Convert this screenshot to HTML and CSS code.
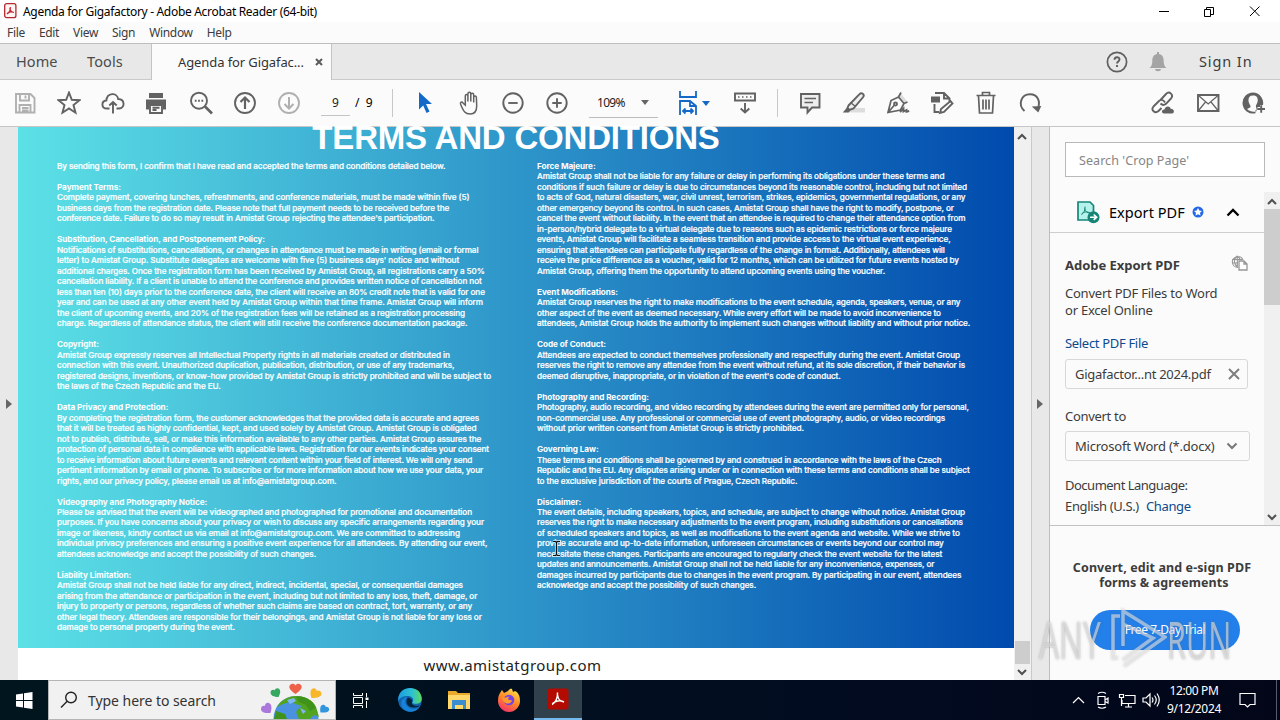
FILE: index.html
```html
<!DOCTYPE html>
<html lang="en">
<head>
<meta charset="utf-8">
<title>Agenda for Gigafactory - Adobe Acrobat Reader (64-bit)</title>
<link rel="stylesheet" href="styles.css">
</head>
<body>
<div class="screen">
<header class="titlebar">
  <svg class="appicon" width="13" height="16" viewBox="0 0 13 16"><rect x=".7" y=".7" width="11.2" height="14" rx="2" fill="#fff5f4" stroke="#b3282d" stroke-width="1.3"/><path d="M3 11c2-1 3.500-4 3.300-7M5.800 5c.4 2.500 2 4.200 4.200 4.500M3 10.800c1-1.600 4-2.400 7-1.500" fill="none" stroke="#c4262e" stroke-width="1.200"/></svg>
  <span class="title">Agenda for Gigafactory - Adobe Acrobat Reader (64-bit)</span>
  <svg class="winbtns" width="104" height="16" viewBox="0 0 104 16" fill="none" stroke="#000" stroke-width="1"><path d="M2 8.500h10M47.500 6.500h6v7h-6zM49.500 6V4.500h7v7H54M93 3.500l9.500 9.500M102.500 3.500L93 13"/></svg>
</header>
<nav class="menubar"><span>File</span><span>Edit</span><span>View</span><span>Sign</span><span>Window</span><span>Help</span></nav>
<div class="tabs">
  <span class="home">Home</span><span class="tools">Tools</span>
  <div class="tab"><span>Agenda for Gigafac...</span><svg width="8" height="8" viewBox="0 0 8 8"><path d="M1 1l6 6M7 1L1 7" stroke="#5b5b5b" stroke-width="2"/></svg></div>
  <div class="account">
    <svg width="22" height="22" viewBox="0 0 22 22" fill="none" stroke="#5f5f5f" stroke-width="1.700"><circle cx="11" cy="11" r="9.600"/><path d="M8.500 8.700c0-3.300 5-3.300 5-.2 0 1.900-2.500 2-2.500 4M11 14v2" stroke-width="1.900"/></svg>
    <svg class="bell" width="20" height="22" viewBox="0 0 20 22" fill="#a4a4a4"><path d="M9 1h2v2c4 .8 4.700 4 4.700 7 0 3.500.8 5.500 2.800 7h-17c2-1.500 2.800-3.500 2.800-7 0-3 .7-6.200 4.700-7zM7 18h6c0 3-6 3-6 0z"/></svg>
    <span>Sign In</span>
  </div>
</div>
<div class="toolbar">
  <div class="tool"><svg viewBox="0 0 24 24" class="dim"><path d="M3 3h14.500l4 4v14.500H3zM7 3v6.500h9V3M6.500 21.500V14h11v7.500M12.500 4.500v3M9 17h6.500M9 19.500h6.500"/></svg></div>
  <div class="tool"><svg viewBox="0 0 24 24"><path d="M12 1.500l2.800 7.300 7.700.4-6 4.900 2 7.600-6.500-4.300-6.500 4.300 2-7.600-6-4.900 7.700-.4z"/></svg></div>
  <div class="tool"><svg viewBox="0 0 24 24"><path d="M8.500 17.500H6c-6 0-6-7.500-.6-8C6 1.500 16 1 17.200 8c7 .3 7 9 .8 9.500h-2.500M12 22.500V11M8.300 14.500L12 11l3.700 3.500"/></svg></div>
  <div class="tool print"><svg viewBox="0 0 24 24"><path class="solid" d="M5 2h14v5H5zM2 8.500h20v10h-3V14H5v4.500H2z"/><path d="M6 14h12v8H6zM8.500 16.800h7M8.500 19h4"/></svg></div>
  <div class="tool"><svg viewBox="0 0 24 24"><circle cx="10" cy="9.700" r="8"/><path d="M16 15.500l7 7" stroke-width="2.700"/><path d="M5.800 9.700h1.800M9.100 9.700h1.800M12.400 9.700h1.800" stroke-width="2"/></svg></div>
  <div class="tool"><svg viewBox="0 0 24 24"><circle cx="12" cy="12" r="10"/><path d="M12 18V6.500M7.500 11L12 6.500l4.500 4.500" stroke-width="2.200"/></svg></div>
  <div class="tool"><svg viewBox="0 0 24 24" class="dim"><circle cx="12" cy="12" r="10"/><path d="M12 6v11.500M7.500 13l4.500 4.500 4.500-4.500" stroke-width="2"/></svg></div>
  <div class="pager"><span class="page">9</span><span class="total">/&nbsp; 9</span></div>
  <div class="tool first"><svg viewBox="0 0 24 24"><path fill="#1468c8" stroke="none" d="M6 1l13 12h-6l3.500 7.500-3 1.500-3.300-7.500L6 18.500z"/></svg></div>
  <div class="tool"><svg viewBox="0 0 24 24"><path stroke-width="1.500" d="M7.800 14V5c0-2 2.600-2 2.600 0v5.500V3c0-2.300 2.900-2.300 2.900 0v7.500V4c0-2.300 2.900-2.300 2.900 0v7.500V6.500c0-2 2.700-2 2.700 0l.3 8.500c0 5-2 8-6.500 8-5 0-6.500-2.200-9.500-9.500-1-2.400 1.200-3.300 2.500-1.300z" transform="translate(.5 0)"/></svg></div>
  <div class="tool"><svg viewBox="0 0 24 24"><circle cx="12" cy="12" r="9.700"/><path d="M7.300 12h9.400"/></svg></div>
  <div class="tool"><svg viewBox="0 0 24 24"><circle cx="12" cy="12" r="9.700"/><path d="M7.300 12h9.400M12 7.300v9.400"/></svg></div>
  <div class="zoombox"><span>109%</span><i class="caret"></i></div>
  <div class="fit"><svg viewBox="0 0 24 26" width="24" height="26" fill="none" stroke="#1468c8" stroke-width="1.800"><path d="M4 1v6h16V1M4 25V11h10l6 5v9M14 11v5h6M7 21h10M9.500 18.500L7 21l2.500 2.500M14.500 18.500L17 21l-2.500 2.500"/></svg><i class="caret blue"></i></div>
  <div class="tool"><svg viewBox="0 0 24 24"><path d="M2 2.500h20v7H2z"/><path d="M5 6h1.500M9 6h1.500M13 6h1.500M17 6h1.500" stroke-width="1.500"/><path d="M12 12v9.500M7.700 17.500L12 21.500l4.300-4"/></svg></div>
  <div class="tool comment"><svg viewBox="0 0 24 24"><path d="M3 3h18.500v13.500H14L9.500 21.500v-5H3z" fill="#eee"/><path d="M6.500 7.500h11.500M6.500 11.500h8.500" stroke-width="1.500"/></svg></div>
  <div class="tool"><svg viewBox="0 0 24 24"><path d="M9 17h14v4.500H3z" fill="#ddd" stroke="none"/><path d="M6.500 14.500L17.500 3.200c2-2.200 5.500.2 3.700 2.800L11.500 17.500 7.500 19l-2-2z" fill="#eee"/><path d="M8.500 11.500l5 4" stroke-width="1.500"/><path class="solid" d="M5 16.500l3.500 3-2 2H.8z"/></svg></div>
  <div class="tool"><svg viewBox="0 0 24 24"><path d="M12.500 6L15 2.500l6.500 8.500L18 12.500z" fill="#ddd" stroke="none"/><path d="M2 21.500L5 9.500 12.500 6l5.500 6.500-3.500 6.500zM12.500 6L15 1.500M18 12.500l3.500-1.500M2.500 21l6-7" stroke-width="1.700"/><circle cx="9.500" cy="13" r="1.500"/><path d="M14 21l3.500-3.500v3l3-1.500v1.800l2.700-.8"/></svg></div>
  <div class="tool"><svg viewBox="0 0 24 24"><path d="M5 2h9l5.500 5.500v3M14 2v5.500h5.500M4.500 13v8H9M10 22l1-4 9.500-8 2 2.500-8.500 8.500z"/><path class="solid" d="M1 5.500h9v6H1z"/></svg></div>
  <div class="tool"><svg viewBox="0 0 24 24"><path d="M2.500 4.500h19M8.500 4V1.500h7V4M4.500 5l1 17h13l1-17M9 8.500v10M12 8.500v10M15 8.500v10" stroke-width="1.700"/></svg></div>
  <div class="tool"><svg viewBox="0 0 24 24"><path d="M6.500 20C-.5 14 3 3.200 12 3.200c8 0 10.500 7.500 8 14"/><path class="solid" d="M13.800 15.500l9.500-.5-3 6.500z"/></svg></div>
  <div class="share">
  <div class="tool"><svg viewBox="0 0 24 24"><path d="M9.500 9l5.500-6c3.500-3.500 8 1 5 4.500l-5 5.300c-2 1.700-4 1.200-5.500-.3M14 11.500c-2-3.500-4.500-3-6-1.500L2.500 15.500c-3 3.500 1.500 7.500 5 4.500l3-3"/><path class="solid" d="M13 22.500c-3-.3-2.500-4.300.5-4 .8-4 5.500-4 6.200-.8 4 0 4 4.500 1.300 4.800z"/></svg></div>
  <div class="tool"><svg viewBox="0 0 24 24"><path d="M2 4h20.500v16H2z"/><path d="M2.500 4.500L12.200 13l9.800-8.500M2.500 19.500l7-8.500M22 19.500l-7-8.500" stroke-width="1.200"/></svg></div>
  <div class="tool"><svg viewBox="0 0 24 24"><path class="solid" fill-rule="evenodd" d="M12 1.500a10.500 10.500 0 1 0 2.500 20.700V19h2v-3H19v-2h3A10.500 10.500 0 0 0 12 1.500zM12 4.500c4 0 5 2.500 4.700 5.500-.2 2-1.200 3-1.700 4.500-.3 1 0 2 .5 3v2.800c-3 1.200-7 .2-9.500-2.300 1.500-1 3-1 3.500-2 .5-1.200-1.700-3-2-6C7.200 7 8.500 4.500 12 4.500z"/><path d="M16.500 18h7.500M20.200 14.200v7.600"/></svg></div>
  </div>
</div>
<main class="work">
  <div class="gutter"><i class="expand"></i></div>
  <section class="document">
    <div class="page-art">
      <h1>TERMS AND CONDITIONS</h1>
      <div class="columns">
<div class="col">By sending this form, I confirm that I have read and accepted the terms and conditions detailed below.

<b>Payment Terms:</b>
Complete payment, covering lunches, refreshments, and conference materials, must be made within five (5)
business days from the registration date. Please note that full payment needs to be received before the
conference date. Failure to do so may result in Amistat Group rejecting the attendee's participation.

<b>Substitution, Cancellation, and Postponement Policy:</b>
Notifications of substitutions, cancellations, or changes in attendance must be made in writing (email or formal
letter) to Amistat Group. Substitute delegates are welcome with five (5) business days' notice and without
additional charges. Once the registration form has been received by Amistat Group, all registrations carry a 50%
cancellation liability. If a client is unable to attend the conference and provides written notice of cancellation not
less than ten (10) days prior to the conference date, the client will receive an 80% credit note that is valid for one
year and can be used at any other event held by Amistat Group within that time frame. Amistat Group will inform
the client of upcoming events, and 20% of the registration fees will be retained as a registration processing
charge. Regardless of attendance status, the client will still receive the conference documentation package.

<b>Copyright:</b>
Amistat Group expressly reserves all Intellectual Property rights in all materials created or distributed in
connection with this event. Unauthorized duplication, publication, distribution, or use of any trademarks,
registered designs, inventions, or know-how provided by Amistat Group is strictly prohibited and will be subject to
the laws of the Czech Republic and the EU.

<b>Data Privacy and Protection:</b>
By completing the registration form, the customer acknowledges that the provided data is accurate and agrees
that it will be treated as highly confidential, kept, and used solely by Amistat Group. Amistat Group is obligated
not to publish, distribute, sell, or make this information available to any other parties. Amistat Group assures the
protection of personal data in compliance with applicable laws. Registration for our events indicates your consent
to receive information about future events and relevant content within your field of interest. We will only send
pertinent information by email or phone. To subscribe or for more information about how we use your data, your
rights, and our privacy policy, please email us at info@amistatgroup.com.

<b>Videography and Photography Notice:</b>
Please be advised that the event will be videographed and photographed for promotional and documentation
purposes. If you have concerns about your privacy or wish to discuss any specific arrangements regarding your
image or likeness, kindly contact us via email at info@amistatgroup.com. We are committed to addressing
individual privacy preferences and ensuring a positive event experience for all attendees. By attending our event,
attendees acknowledge and accept the possibility of such changes.

<b>Liability Limitation:</b>
Amistat Group shall not be held liable for any direct, indirect, incidental, special, or consequential damages
arising from the attendance or participation in the event, including but not limited to any loss, theft, damage, or
injury to property or persons, regardless of whether such claims are based on contract, tort, warranty, or any
other legal theory. Attendees are responsible for their belongings, and Amistat Group is not liable for any loss or
damage to personal property during the event.</div>
<div class="col"><b>Force Majeure:</b>
Amistat Group shall not be liable for any failure or delay in performing its obligations under these terms and
conditions if such failure or delay is due to circumstances beyond its reasonable control, including but not limited
to acts of God, natural disasters, war, civil unrest, terrorism, strikes, epidemics, governmental regulations, or any
other emergency beyond its control. In such cases, Amistat Group shall have the right to modify, postpone, or
cancel the event without liability. In the event that an attendee is required to change their attendance option from
in-person/hybrid delegate to a virtual delegate due to reasons such as epidemic restrictions or force majeure
events, Amistat Group will facilitate a seamless transition and provide access to the virtual event experience,
ensuring that attendees can participate fully regardless of the change in format. Additionally, attendees will
receive the price difference as a voucher, valid for 12 months, which can be utilized for future events hosted by
Amistat Group, offering them the opportunity to attend upcoming events using the voucher.

<b>Event Modifications:</b>
Amistat Group reserves the right to make modifications to the event schedule, agenda, speakers, venue, or any
other aspect of the event as deemed necessary. While every effort will be made to avoid inconvenience to
attendees, Amistat Group holds the authority to implement such changes without liability and without prior notice.

<b>Code of Conduct:</b>
Attendees are expected to conduct themselves professionally and respectfully during the event. Amistat Group
reserves the right to remove any attendee from the event without refund, at its sole discretion, if their behavior is
deemed disruptive, inappropriate, or in violation of the event's code of conduct.

<b>Photography and Recording:</b>
Photography, audio recording, and video recording by attendees during the event are permitted only for personal,
non-commercial use. Any professional or commercial use of event photography, audio, or video recordings
without prior written consent from Amistat Group is strictly prohibited.

<b>Governing Law:</b>
These terms and conditions shall be governed by and construed in accordance with the laws of the Czech
Republic and the EU. Any disputes arising under or in connection with these terms and conditions shall be subject
to the exclusive jurisdiction of the courts of Prague, Czech Republic.

<b>Disclaimer:</b>
The event details, including speakers, topics, and schedule, are subject to change without notice. Amistat Group
reserves the right to make necessary adjustments to the event program, including substitutions or cancellations
of scheduled speakers and topics, as well as modifications to the event agenda and website. While we strive to
provide accurate and up-to-date information, unforeseen circumstances or events beyond our control may
necessitate these changes. Participants are encouraged to regularly check the event website for the latest
updates and announcements. Amistat Group shall not be held liable for any inconvenience, expenses, or
damages incurred by participants due to changes in the event program. By participating in our event, attendees
acknowledge and accept the possibility of such changes.</div>
      </div>
    </div>
    <div class="page-foot">www.amistatgroup.com</div>
    <svg class="cursor" width="9" height="17" viewBox="0 0 9 17"><path d="M1 1.500h2.500l1 1 1-1H8M4.500 2.500v12M1 15.500h2.500l1-1 1 1H8" fill="none" stroke="#cde4f5" stroke-width="2.600"/><path d="M1 1.500h2.500l1 1 1-1H8M4.500 2.500v12M1 15.500h2.500l1-1 1 1H8" fill="none" stroke="#111" stroke-width="1.200"/></svg>
  </section>
  <div class="scroll">
    <svg viewBox="0 0 10 7"><path d="M1 6l4-4 4 4"/></svg><i class="thumb"></i><svg viewBox="0 0 10 7"><path d="M1 1l4 4 4-4"/></svg>
  </div>
  <div class="gutter right"><i class="expand"></i></div>
  <aside class="panel">
    <div class="search">Search 'Crop Page'</div>
    <div class="tooling">
      <div class="export">
        <div class="exporthead">
          <svg width="24" height="24" viewBox="0 0 24 24"><path d="M2 2h12l3.500 3.500V20H2z" fill="#b5f2ec" stroke="#168578" stroke-width="1.700"/><path d="M5.500 14.500c2-1 3.800-4 3.500-8M8.700 8.500c.5 3 2.500 4.500 5.300 4.500M5.500 14c2-2 5-3 8.500-1" fill="none" stroke="#168578" stroke-width="1"/><circle cx="17.500" cy="17.200" r="6" fill="#168578"/><path d="M14 17.200h6M17.700 14.500l3 2.700-3 2.700" fill="none" stroke="#fff" stroke-width="1.600"/></svg>
          <span class="name">Export PDF</span>
          <svg class="badge" width="12" height="12" viewBox="0 0 12 12"><circle cx="6" cy="6" r="5.500" fill="#2468e8"/><path fill="#fff" d="M6 2l1.300 2.500 2.700.4-2 1.900.5 2.700L6 8.300 3.500 9.500 4 6.800 2 4.900l2.700-.4z"/></svg>
          <svg class="up" width="14" height="9" viewBox="0 0 14 9"><path d="M1.500 7.500L7 2l5.500 5.500" fill="none" stroke="#000" stroke-width="2.300"/></svg>
        </div>
        <div class="exportbody">
          <div class="adobe"><b>Adobe Export PDF</b><svg width="17" height="16" viewBox="0 0 17 16" fill="none" stroke="#969696" stroke-width="1.100"><path d="M7 12.500A5.500 5.500 0 1 1 12 5M1 4.500h10M1 8h6M6.300 1C2 4 3 9 6.300 12M6.300 1v11M6.300 1c2 1.500 2.600 2.500 2.700 4"/><path fill="#fff" stroke-width="1.300" d="M8 6h5l3 3v6H8zM13 6v3h3"/></svg></div>
          <p class="desc">Convert PDF Files to Word<br>or Excel Online</p>
          <div class="link">Select PDF File</div>
          <div class="field f1"><span>Gigafactor...nt 2024.pdf</span><svg width="12" height="12" viewBox="0 0 12 12"><path d="M1 1l10 10M11 1L1 11" stroke="#7e7e7e" stroke-width="2"/></svg></div>
          <div class="label">Convert to</div>
          <div class="field f2"><span>Microsoft Word (*.docx)</span><svg width="12" height="8" viewBox="0 0 12 8"><path d="M1.500 1.500L6 6l4.500-4.500" fill="none" stroke="#777" stroke-width="2"/></svg></div>
          <div class="label l2">Document Language:</div>
          <div class="lang">English (U.S.) <span>Change</span></div>
        </div>
      </div>
      <div class="scroll side"><svg viewBox="0 0 10 7"><path d="M1 6l4-4 4 4"/></svg><i class="thumb"></i><svg viewBox="0 0 10 7"><path d="M1 1l4 4 4-4"/></svg></div>
    </div>
    <div class="promo"><b>Convert, edit and e-sign PDF<br><span>forms &amp; agreements</span></b><div class="trial">Free 7-Day Trial</div></div>
  </aside>
</main>
<footer class="taskbar">
  <div class="start"><svg width="17" height="17" viewBox="0 0 17 17" fill="#fff"><path d="M0 2.500L7 1.500V8H0zM8 1.300L16.500 0v8H8zM0 9h7v6.500l-7-1zM8 9h8.500v8L8 15.700z"/></svg></div>
  <div class="find">
    <svg width="18" height="18" viewBox="0 0 18 18" fill="none" stroke="#222" stroke-width="1.400"><circle cx="11" cy="6.500" r="5.300"/><path d="M7.200 10.300L1 16.500"/></svg>
    <span>Type here to search</span>
    <svg class="earth" width="72" height="38" viewBox="0 0 72 38"><circle cx="36" cy="37.500" r="22.500" fill="#4a91e2"/><path d="M17 26c4-7 11-11 19-11 9 0 17 4 20 11l3 10c-5-3-6-2-9 2H39c-1-4-4-5-2-9l5-4-7-2-4-4-4 3-4 1z" fill="#52a420"/><path d="M36 16c9-2 17 4 20 11l-6 3-4-6-7-3z" fill="#3f921a"/><path d="M27 19l7-2 2 3-6 3zM40 27l6 3-3 3z" fill="#7eb8f3"/><path d="M16 30l9 3 2 5H14z" fill="#3f921a"/>
      <g><path d="M35.500 13c-5-3.500-7.500-6.500-5.500-9 2-2 4.500-1.200 5.500.5 1-1.700 3.500-2.500 5.500-.5 2 2.500-.5 5.500-5.500 9z" fill="#ef6048"/><path d="M18.500 16c-4.500 0-8-1.500-8-4.500 0-2.500 2.500-3.500 4.200-2.300.5-2 3.300-2.800 4.800-.9 1.500 2 .5 4.700-1 7.700z" fill="#35a760"/><path d="M51.500 17c-1.500-4.500-1.500-8.500 1.300-9.500 2.200-.6 3.700.7 3.900 2.400 2-.9 4.500.2 4.800 2.500.2 2.800-3.500 4.600-10 4.600z" fill="#f8b62b"/><path d="M10.500 32c-5 .5-9.500-.5-9.500-4 0-2.500 2-3.700 4-3-.2-2.400 2-4 4-2.900 3 1.500 3 5.500 1.500 9.900z" fill="#aa78dc"/><path d="M60.500 31.500c-.8-4-.2-7.500 2.500-7.800 1.600-.2 2.600.8 2.700 2.200 1.700-.5 3.500.5 3.500 2.500-.2 2.500-3.700 3.500-8.700 3.100z" fill="#3195de"/></g></svg>
  </div>
  <div class="task"><svg width="17" height="17" viewBox="0 0 17 17" fill="none" stroke="#fff"><path d="M1.500 1v2.500h9V1M1.500 16v-2.500h9V16M1.500 5.500h9v6h-9zM14.500 1v4M14.500 9v7"/><path d="M13.500 5.500h3v2.500h-3z" fill="#fff" stroke="none"/></svg></div>
  <div class="task"><svg width="24" height="24" viewBox="0 0 24 24"><defs><linearGradient id="eg" x1="0" x2="1"><stop stop-color="#1b9de2"/><stop offset=".6" stop-color="#2fc2cf"/><stop offset="1" stop-color="#5edb5b"/></linearGradient></defs><circle cx="12" cy="12" r="11.800" fill="#1464b0"/><path d="M.2 11C1-3.500 23-3.500 23.800 10.500c0 5-5 6-8.500 5-1.300-.5-1-1-.5-2 1.500-3-1.500-5.500-5-5.500C6 8 1 9 .2 14z" fill="url(#eg)"/><path d="M9.500 9c-5 4-1 12 6 12 3 0 5-1 7-3-5 8-15 7-18.500 1C1.500 14 5 9 9.500 9z" fill="#1683d8"/><path d="M10 9.500c-4 5 0 10 6 10 3 0 5-1 6-2-4 1-8.500 0-8-3 0-1.500 1.500-3-4-5z" fill="#04243c"/></svg></div>
  <div class="task"><svg width="22" height="20" viewBox="0 0 22 20"><path d="M0 1h8l2 2h12v15H0z" fill="#e9a92c"/><path d="M0 5h22v14H0z" fill="#ffd76a"/><path d="M4 10h14v9h-3v-4H7v4H4z" fill="#3a8ed0"/></svg></div>
  <div class="task"><svg width="24" height="24" viewBox="0 0 24 24"><defs><linearGradient id="ff" x1=".8" y1="0" x2=".3" y2="1"><stop stop-color="#ffe14a"/><stop offset=".5" stop-color="#ff8a26"/><stop offset="1" stop-color="#f5316b"/></linearGradient></defs><path d="M3 5l2-3 2 3 4-2c2-3 4-2 4-2l1 3 2-1c4 2 5 6 5 10 0 6-5 11-11 11S1 19 1 13c0-3 .5-6 2-8z" fill="url(#ff)"/><circle cx="12" cy="12" r="5.300" fill="#7542e5"/><path d="M5 10c4 0 5-2 8-1-4 1-1 4 2 3 0 4-8 6-10-2z" fill="#ff9a2c"/></svg></div>
  <div class="task active"><svg width="22" height="22" viewBox="0 0 22 22"><rect x=".5" y=".5" width="21" height="21" rx="2.500" fill="#b30b00"/><path d="M5 16.500c3.500-1.500 6-7 5.500-12M10.500 7c.5 4 3 6.500 6.500 7M5.500 15.500c3-2.500 7.500-3.500 11.500-1.500" fill="none" stroke="#fff" stroke-width="1.500"/></svg></div>
  <div class="tray">
    <svg width="88" height="18" viewBox="0 0 88 18" fill="none" stroke="#fff" stroke-width="1.200"><path d="M1 12l5.500-5.500L12 12M26 5.500h7v8h-7zM33 9l3-2v5l-3-1.500M26 2.500q4-2.500 8 0M26 16q4 2.500 8 0M53 4.500h10v8H50V9M56.500 13v3M53 16h7M47.500 3.500h4v3h-4zM49.500 7v8M71 7h3l4-4v12l-4-4h-3zM80 6.500q2 2.500 0 5M82.500 4.500q3.500 4.500 0 9M85 2.500q4.500 6.500 0 13"/></svg>
    <div class="clock"><span>12:00 PM</span><span>9/12/2024</span></div>
    <svg class="notice" width="17" height="17" viewBox="0 0 17 17" fill="none" stroke="#fff" stroke-width="1.200"><path d="M1 1.500h15v11h-5L8.500 15 6 12.500H1z"/></svg>
    <i class="desk"></i>
  </div>
</footer>
<div class="mark"><span class="any">ANY</span><svg width="62" height="66" viewBox="0 0 62 66" fill="none" stroke-width="3.500"><path d="M15 10H8v42h5M18 40V5l42 26-41 29M18 18l30 14-30 22"/></svg><span class="run">RUN</span></div>
</div>
</body>
</html>
```
FILE: styles.css
```css
* { box-sizing: border-box; }
body { margin: 0; font-family: "Noto Sans", "Open Sans", sans-serif; color: #3c3c3c; }
svg { display: block; flex: none; }
.screen { position: relative; width: 1280px; height: 720px; overflow: hidden; display: flex; flex-direction: column; background: #fff; }
.titlebar { height: 22px; display: flex; align-items: center; padding: 0 19px 0 4px; background: #fff; }
.title { font-size: 12px; line-height: 22px; color: #000; margin-left: 6px; white-space: nowrap; letter-spacing: -.31px; padding-top: 2px; }
.winbtns { margin-left: auto; }
.menubar { height: 21px; background: #fbfbfb; display: flex; gap: 14px; padding-left: 7px; font-size: 12px; line-height: 22px; letter-spacing: -.33px; }
.tabs { height: 37px; background: #e8e8e8; border-top: 1px solid #bdbdbd; border-bottom: 1px solid #cacaca; display: flex; line-height: 35px; font-size: 14.500px; color: #4b4b4b; white-space: nowrap; }
.home { padding-left: 16px; width: 87px; letter-spacing: .1px; }
.tools { width: 64px; letter-spacing: .1px; }
.tab { width: 181px; height: 36px; background: #fbfbfb; border: solid #c4c4c4; border-width: 0 1px; display: flex; align-items: center; padding: 0 8px 0 26px; justify-content: space-between; font-size: 13px; color: #333; letter-spacing: -.1px; }
.account { display: flex; align-items: center; margin-left: auto; padding-right: 25px; height: 35px; }
.account span { letter-spacing: .9px; color: #3c3c3c; width: 56px; }
.account .bell { margin: 0 31px 0 20px; }
.toolbar { height: 47px; background: #fbfbfb; border-bottom: 1px solid #c6c6c6; display: flex; align-items: center; padding-left: 3px; }
.tool { width: 44px; flex: none; display: flex; justify-content: center; }
.tool svg { width: 24px; height: 24px; fill: none; stroke: #626262; stroke-width: 1.9; }
.tool svg.dim { stroke: #b0b0b0; }
.tool .solid { fill: #626262; stroke: none; }
.print { padding-right: 2px; }
.pager { width: 82px; height: 28px; border-right: 1px solid #c8c8c8; display: flex; font-size: 12px; line-height: 27px; color: #222; padding-left: 10px; }
.page { width: 29px; height: 27px; border-bottom: 1px solid #c4c4c4; text-align: center; }
.total { padding-left: 5px; color: #000; }
.first { margin-left: 10px; }
.zoombox { width: 69px; height: 26px; margin: 3px 0 0 10px; border-bottom: 1px solid #bbb; display: flex; align-items: center; justify-content: space-between; padding: 0 9px 3px 8px; font-size: 12px; color: #222; letter-spacing: -.7px; }
.caret { width: 0; height: 0; border: 4px solid transparent; border-top: 5px solid #666; border-bottom: 0; }
.caret.blue { border-top-color: #1468c8; }
.fit { display: flex; align-items: center; margin-left: 18px; gap: 2px; width: 47px; }
.comment { border-left: 1px solid #c8c8c8; margin-left: 10px; padding-left: 10px; width: 55px; height: 28px; align-items: center; }
.share { display: flex; margin-left: auto; padding-right: 5px; gap: 1px; }
.work { flex: 1; min-height: 0; display: flex; }
.gutter { width: 18px; background: #e8e8e8; display: flex; align-items: center; justify-content: center; }
.gutter.right { border-left: 1px solid #c9c9c9; border-right: 1px solid #bdbdbd; width: 19px; padding-right: 2px; }
.expand { border: 5px solid transparent; border-left: 6px solid #666; border-right: 0; }
.document { position: relative; width: 996px; }
.page-art { height: 521px; background: linear-gradient(90deg, #5ce1e6, #004aad); color: #fff; }
h1 { margin: 0; height: 34px; font: bold 33px/22px "Liberation Sans", sans-serif; text-align: center; letter-spacing: -.2px; }
.columns { display: flex; padding-left: 39px; }
.col { width: 479.500px; margin-right: .5px; flex: none; font: 500 8.200px/10.490px Inter, sans-serif; white-space: pre; letter-spacing: -.096px; -webkit-text-stroke: .2px #fff; }
.columns { overflow: hidden; }
.col b { font-weight: 700; letter-spacing: -.08px; -webkit-text-stroke: 0; }
.page-foot { height: 32px; background: #fff; color: #222; font: 15px/35px "Noto Sans", sans-serif; text-align: center; padding-right: 7px; letter-spacing: .48px; }
.cursor { position: absolute; left: 534px; top: 413px; }
.scroll { width: 17px; background: #f0f0f0; display: flex; flex-direction: column; align-items: center; padding: 6px 1px 4px 0; }
.scroll svg { width: 10px; height: 7px; fill: none; stroke: #505050; stroke-width: 2; }
.scroll .thumb { width: 15px; height: 23px; background: #cdcdcd; margin: auto 0 5px; }
.panel { flex: 1; background: #fbfbfb; display: flex; flex-direction: column; }
.search { width: 200px; height: 35px; margin: 15px 0 15px 15px; border: 1px solid #b9b9b9; background: #fff; color: #858585; font-size: 12.500px; line-height: 35px; padding-left: 13px; letter-spacing: .07px; }
.tooling { height: 334px; display: flex; border-bottom: 1px solid #c2c2c2; }
.export { width: 214px; }
.side { width: 16px; margin-left: auto; padding-right: 0; }
.side .thumb { width: 16px; height: 96px; margin: 4px 0 auto; }
.exporthead { height: 41px; display: flex; align-items: center; border-bottom: 1px solid #cecece; padding-left: 26px; }
.name { color: #000; font-size: 14.500px; width: 77px; margin-left: 9px; white-space: nowrap; letter-spacing: .05px; }
.badge { margin-left: 6px; }
.up { margin-left: 22px; }
.exportbody { padding-left: 15px; font-size: 13px; white-space: nowrap; }
.adobe { display: flex; justify-content: space-between; padding: 22px 16px 0 0; line-height: 20px; }
.adobe b { letter-spacing: -.03px; }
.desc { margin: 10px 0 0; line-height: 17px; letter-spacing: -.23px; }
.link { color: #0b4a8f; line-height: 20px; margin: 14px 0 6px; letter-spacing: -.32px; }
.field { width: 183px; height: 30px; border: 1px solid #d8d8d8; border-radius: 3px; display: flex; align-items: center; justify-content: space-between; padding: 0 7px 0 9px; letter-spacing: -.27px; }
.f2 { width: 185px; padding-right: 11px; letter-spacing: -.22px; }
.label { line-height: 20px; margin: 17px 0 5px; letter-spacing: -.3px; }
.l2 { margin: 14px 0 1px; letter-spacing: -.5px; }
.lang { line-height: 20px; letter-spacing: -.35px; }
.lang span { color: #0b4a8f; margin-left: 4px; }
.promo { display: flex; flex-direction: column; align-items: center; font-size: 12.500px; line-height: 15px; padding: 34px 6px 0 0; text-align: center; }
.promo b { letter-spacing: .1px; }
.promo span { margin-left: 4px; }
.trial { margin: 20px 0 0 6px; width: 150px; height: 40px; border-radius: 20px; background: #237fe9; color: #fff; font-size: 12px; line-height: 39px; letter-spacing: -.4px; }
.taskbar { height: 40px; background: linear-gradient(90deg, #00151d, #020b20 70%, #020618); display: flex; }
.start { width: 48px; display: flex; align-items: center; justify-content: center; }
.find { width: 288px; background: #f1f1f1; border: 1px solid #b5b5b5; display: flex; align-items: center; color: #333; font-size: 14px; padding-left: 11px; white-space: nowrap; }
.find span { margin-left: 10px; letter-spacing: -.05px; }
.earth { margin-left: auto; margin-right: 3px; }
.task { width: 48px; margin-right: 1.500px; display: flex; align-items: center; justify-content: center; }
.active { background: #31414c; border-bottom: 2px solid #76b9ed; }
.tray { margin-left: auto; display: flex; align-items: center; color: #fff; }
.clock { display: flex; flex-direction: column; align-items: center; width: 56px; margin-left: 6px; font-size: 12px; line-height: 18px; letter-spacing: -.35px; white-space: nowrap; }
.notice { margin: 0 20px 0 17px; }
.desk { height: 40px; width: 4px; border-left: 1px solid #555b69; }
.mark { position: absolute; left: 1039px; top: 606px; display: flex; align-items: center; color: rgba(238,238,238,.55); font: 400 52px/66px "Open Sans", sans-serif; text-shadow: 0 0 3px rgba(110,110,110,.55); }
.mark span { transform-origin: left; width: 66px; }
.any { transform: scaleX(.61); }
.run { transform: scaleX(.59); }
.mark svg { stroke: rgba(238,238,238,.55); filter: drop-shadow(0 0 1px rgba(100,100,100,.5)); }
```
